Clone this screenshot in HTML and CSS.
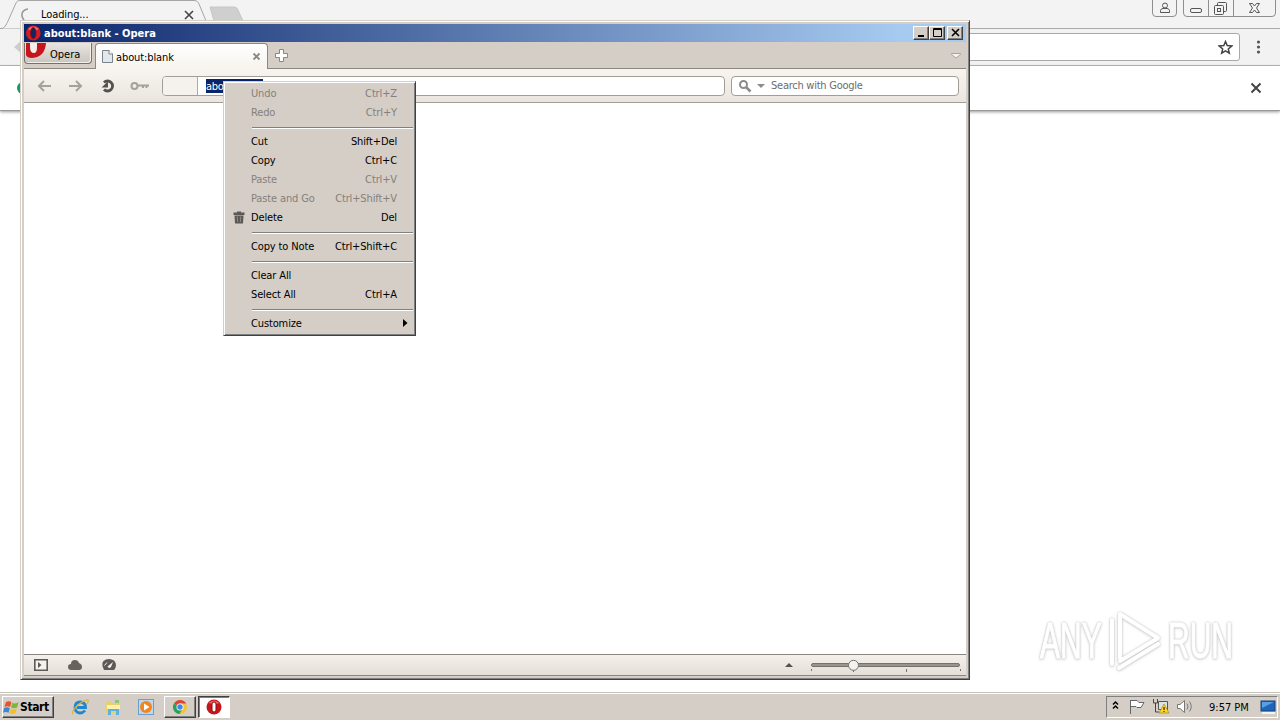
FILE: index.html
```html
<!DOCTYPE html>
<html lang="en">
<head>
	<meta charset="UTF-8">
	<title>Desktop</title>
	<link rel="stylesheet" href="styles.css">
</head>
<body>
	<!-- browser in the background -->
	<div class="chrome">
		<div class="chrome-tabs">
			<svg class="tab-shapes" width="260" height="29" viewBox="0 0 260 29">
				<path d="M0 28.5H1C5 28 6 25 8 21L16 3C17 1 18 .5 21 .5H194C197 .5 198 2 199 4L209 28" fill="#f3f3f3" stroke="#a5a5a5"/>
				<path d="M210 7H234Q237 7 238 10L243 21H214Z" fill="#cfcfcf" stroke="#c6c6c6"/>
				<path d="M28 9C22 10 20 15 24 20" fill="none" stroke="#999" stroke-width="1.6"/>
				<path d="M185 11L193 19M193 11L185 19" stroke="#444" stroke-width="1.6"/>
			</svg>
			<span class="loading">Loading...</span>
			<div class="chrome-buttons">
				<svg width="130" height="18" viewBox="0 0 130 18" fill="none" stroke="#8f8f8f">
					<path d="M2.500 0V13Q2.500 16.500 6 16.500H23Q26.500 16.500 26.500 13V0M33.500 0V13Q33.500 16.500 37 16.500H122Q125.500 16.500 125.500 13V0M58.500 0V16M83.500 0V16"/>
					<g stroke="#555">
						<circle cx="15" cy="5.500" r="2.500"/>
						<path d="M10.500 12.500V10.500Q11 8.500 13 8.500H17Q19 8.500 19.500 10.500V12.500Z"/>
						<rect x="40.500" y="8.500" width="11" height="4" rx="1.500"/>
						<rect x="67.500" y="2.500" width="9" height="9" rx="1"/>
						<rect x="64.500" y="5.500" width="9" height="9" rx="1" fill="#f3f3f3"/>
						<rect x="67.500" y="8.500" width="3" height="3"/>
						<path d="M99.500 3.500H102.500L104.500 6L106.500 3.500H109.500L106.500 8L109.500 12.500H106.500L104.500 10L102.500 12.500H99.500L102.500 8Z"/>
					</g>
				</svg>
			</div>
		</div>
		<div class="chrome-toolbar">
			<svg class="chrome-back" width="20" height="18" viewBox="0 0 20 18"><path d="M14 9L22 2V16Z" fill="#ccc"/></svg>
			<div class="omnibox">
				<svg width="15" height="15" viewBox="0 0 15 15"><path d="M7.500 1.500L9.200 5.600L13.700 6L10.300 8.900L11.300 13.200L7.500 10.900L3.700 13.200L4.700 8.900L1.300 6L5.800 5.600Z" fill="none" stroke="#444" stroke-width="1.500"/></svg>
			</div>
			<svg width="40" height="16" viewBox="0 0 40 16" fill="#555"><circle cx="18.500" cy="3" r="1.600"/><circle cx="18.500" cy="8" r="1.600"/><circle cx="18.500" cy="13" r="1.600"/></svg>
		</div>
		<div class="infobar">
			<span class="dot"></span>
			<svg width="12" height="12" viewBox="0 0 12 12"><path d="M1.500 1.500L10.500 10.500M10.500 1.500L1.500 10.500" stroke="#444" stroke-width="2"/></svg>
		</div>
	</div>

	<div class="watermark">
		<span>ANY</span>
		<svg width="58" height="66" viewBox="0 0 58 66" fill="none" stroke="#fff" stroke-width="4" stroke-linejoin="round" stroke-linecap="round">
			<path d="M16 50V6L54 30L16 53"/>
			<path d="M8 12V56"/>
			<path d="M15 60L54 36"/>
		</svg>
		<span>RUN</span>
	</div>

	<!-- opera window -->
	<div class="opera">
		<div class="titlebar">
			<svg width="17" height="18" viewBox="0 0 17 18"><ellipse cx="9.300" cy="9" rx="7.300" ry="7.600" fill="#d51c20"/><path d="M4 5Q9 0 15 5Q9 8 4 5" fill="#ee7770"/><ellipse cx="9.300" cy="9" rx="2.700" ry="5.600" fill="#13245e" stroke="#8c0d18"/></svg>
			<span class="title">about:blank - Opera</span>
			<div class="win-btn"><svg width="14" height="12"><path d="M3 9H9" stroke="#000" stroke-width="2"/></svg></div>
			<div class="win-btn"><svg width="14" height="12"><path d="M2.500 1.500H10.500V9.500H2.500ZM2 2.500H11" fill="none" stroke="#000"/></svg></div>
			<div class="win-btn close"><svg width="14" height="12"><path d="M3 2L10 9M10 2L3 9" stroke="#000" stroke-width="1.600"/></svg></div>
		</div>
		<div class="tabbar">
			<div class="opera-btn">
				<svg width="22" height="18" viewBox="0 0 22 18"><path d="M1 0H21Q20 14 7 15Q2 15 1 12Z" fill="#c8141c"/><path d="M5 0V4Q5 10 9 10Q12 10 12 4V0Z" fill="#f3efec"/></svg>
				<span>Opera</span>
			</div>
			<div class="tab">
				<svg width="13" height="15" viewBox="0 0 13 15"><path d="M1.500 1.500H8L11.500 5V13.500H1.500Z" fill="#e3e8ec" stroke="#7b828a"/><path d="M8 1V5H12" fill="#fff" stroke="#7b828a"/></svg>
				<span>about:blank</span>
				<svg class="tab-x" width="9" height="9" viewBox="0 0 9 9"><path d="M1.500 1.500L7.500 7.500M7.500 1.500L1.500 7.500" stroke="#8d8984" stroke-width="1.800"/></svg>
			</div>
			<svg class="plus" width="15" height="15" viewBox="0 0 15 15"><path d="M5.500 1.500H9.500V5.500H13.500V9.500H9.500V13.500H5.500V9.500H1.500V5.500H5.500Z" fill="#fff" stroke="#8a857f"/></svg>
			<svg class="tab-menu" width="10" height="7" viewBox="0 0 10 7"><path d="M.5 1.500H9.500V2.500L5 6L.5 2.500Z" fill="#f6f2ee" stroke="#a9a39d"/></svg>
		</div>
		<div class="toolbar">
			<svg class="nav" width="128" height="20" viewBox="0 0 128 20">
				<g fill="none" stroke="#a5a19c" stroke-width="2">
					<path d="M27 10H15M20 5L15 10L20 15"/>
					<path d="M45 10H57M52 5L57 10L52 15"/>
				</g>
				<path d="M80 6.500A5 5 0 1 1 80 13.500" fill="none" stroke="#55514e" stroke-width="2.800"/>
				<path d="M77.500 11.500H84V5.500Z" fill="#55514e"/>
				<circle cx="110.500" cy="10" r="3" fill="none" stroke="#a5a19c" stroke-width="2"/>
				<path d="M113 9.500H125M119 9V12M122.500 9V12" fill="none" stroke="#a5a19c" stroke-width="2"/>
			</svg>
			<div class="address"><span class="badge"></span><span class="selected">abo</span></div>
			<div class="search">
				<svg width="27" height="14" viewBox="0 0 27 14"><circle cx="4.500" cy="5.500" r="3.500" fill="none" stroke="#8b8b8b" stroke-width="2"/><path d="M7 8L11.500 12.500" stroke="#8b8b8b" stroke-width="2.500"/><path d="M18 5H26L22 9Z" fill="#8b8b8b"/></svg>
				<span>Search with Google</span>
			</div>
		</div>
		<div class="page"></div>
		<div class="statusbar">
			<svg width="90" height="16" viewBox="0 0 90 16">
				<path d="M.8 2.800H13.200V13.200H.8Z" fill="#f5f1ec" stroke="#5d5956" stroke-width="1.600"/><path d="M4 5L7.500 8L4 11Z" fill="#5d5956"/>
				<path d="M37 13Q34 12.500 34 10Q34 7 37 7Q37 3 41 3Q44 3 45 6Q48 7 48 10Q48 13 45 13Z" fill="#67635f"/>
				<path d="M70 13Q65.500 5 72 2.500Q76 1 80 3.500Q84 8 80 13Z" fill="#5d5956"/><path d="M73.500 9.500L79 5L77 10Q75 12 73.500 9.500Z" fill="#f5f1ec"/><path d="M70.500 8.500L73 5.500" stroke="#f5f1ec"/>
			</svg>
			<svg width="182" height="18" viewBox="0 0 182 18">
				<path d="M1 10L5 6L9 10Z" fill="#55514e"/>
				<rect x="27.500" y="6.500" width="148" height="3" rx="1.500" fill="#9a948e" stroke="#77716b"/>
				<path d="M27.500 12V14M69.500 12V15M122.500 12V15M176.500 12V14" stroke="#77716b"/>
				<circle cx="69.500" cy="8.300" r="5" fill="#f4f2f0" stroke="#77716b"/>
			</svg>
		</div>
	</div>

	<div class="menu">
		<div class="item off"><span>Undo</span><span>Ctrl+Z</span></div>
		<div class="item off"><span>Redo</span><span>Ctrl+Y</span></div>
		<hr>
		<div class="item"><span>Cut</span><span>Shift+Del</span></div>
		<div class="item"><span>Copy</span><span>Ctrl+C</span></div>
		<div class="item off"><span>Paste</span><span>Ctrl+V</span></div>
		<div class="item off"><span>Paste and Go</span><span>Ctrl+Shift+V</span></div>
		<div class="item">
			<svg class="trash" width="12" height="13" viewBox="0 0 12 13"><path d="M.5 1.500H4V.5H8V1.500H11.500V4H.5ZM1.500 4.500H10.500L10 12.500H2Z" fill="#5c5855"/><path d="M4.500 5.500V11M7.500 5.500V11" stroke="#8b8681"/></svg>
			<span>Delete</span><span>Del</span>
		</div>
		<hr>
		<div class="item"><span>Copy to Note</span><span>Ctrl+Shift+C</span></div>
		<hr>
		<div class="item"><span>Clear All</span></div>
		<div class="item"><span>Select All</span><span>Ctrl+A</span></div>
		<hr>
		<div class="item"><span>Customize</span><svg class="arrow" width="5" height="8"><path d="M0 0L4.500 4L0 8Z"/></svg></div>
	</div>

	<div class="taskbar">
		<div class="start">
			<svg width="17" height="17" viewBox="0 0 18 17"><path d="M3 3Q6 1 9 3L7.500 8Q5 6.500 1.500 8Z" fill="#e8532b"/><path d="M10 3.500Q13 5 16.500 3L15 8.500Q12 10 8.500 8.500Z" fill="#78b93c"/><path d="M1.200 9Q4 7.500 7.200 9L6 14Q3 12.500 0 14Z" fill="#3c87cf"/><path d="M8.200 9.500Q11 11 14.700 9.500L13 14.500Q10 16 7 14.500Z" fill="#f6bd2a"/></svg>
			<span>Start</span>
		</div>
		<div class="launch">
			<svg width="18" height="18" viewBox="0 0 18 18"><path d="M14 12.500Q12 15 9 15Q4 14.500 4 9.500Q4 4 9.500 4Q14.500 4.500 14.500 9.500H6" fill="none" stroke="#1e86d2" stroke-width="2.800"/><path d="M2 16Q0 14 6 8Q14 1 17 2Q18 3 16 6" fill="none" stroke="#ddb63c" stroke-width="1.300"/></svg>
			<svg width="18" height="18" viewBox="0 0 18 18"><path d="M2 3H7L8 5H15V15H2Z" fill="#e8cf70"/><path d="M3 7H16V11H3Z" fill="#fff1ad"/><path d="M4 17V11H15V17H12V13H7V17Z" fill="#59b2e0"/><path d="M11 2H15V5H11Z" fill="#8fc576"/></svg>
			<svg width="18" height="18" viewBox="0 0 18 18"><rect x="1.500" y="1.500" width="15" height="15" fill="#bcd7ef" stroke="#6c9fcf"/><circle cx="9" cy="9" r="6" fill="#f1871b"/><path d="M7 5.500L12.500 9L7 12.500Z" fill="#fff"/></svg>
		</div>
		<div class="task">
			<svg width="16" height="16" viewBox="0 0 16 16"><circle cx="8" cy="8" r="7" fill="#f3c52f"/><path d="M8 8L2 4.500A7 7 0 0 1 14.200 4.500H8Z" fill="#dc4437"/><path d="M1.900 4.500A7 7 0 0 0 7.500 15L10.500 10L8 8Z" fill="#2e9f59"/><circle cx="8" cy="8" r="3.500" fill="#fff"/><circle cx="8" cy="8" r="2.700" fill="#4384ee"/></svg>
		</div>
		<div class="task active">
			<svg width="16" height="16" viewBox="0 0 16 16"><circle cx="8" cy="8" r="7.500" fill="#c5161c"/><path d="M2.500 4Q8-1 13.500 4Q9 6 2.500 4" fill="#e7655e"/><rect x="6" y="3" width="4" height="10" rx="2" fill="#fff" stroke="#8c080d"/></svg>
		</div>
		<div class="tray">
			<svg width="92" height="18" viewBox="0 0 92 18">
				<path d="M6 6.500L8.500 4L11 6.500M6 10.500L8.500 8L11 10.500" fill="none" stroke="#000" stroke-width="1.500"/>
				<path d="M23.500 2V16M24 2.500H30L32 4.500H37L34 9.500H30L29 8.500H24" fill="#fff" stroke="#666"/>
				<path d="M51.500 3.500H60.500V11.500H51.500ZM53 14.500H59" fill="#d9e2e6" stroke="#555"/><path d="M46.500 1V5H50.500V1M48.500 5V14H52" fill="none" stroke="#444"/>
				<path d="M57 6L62 15H52Z" fill="#ffd530" stroke="#9c7c00" stroke-width=".6"/><path d="M57 9V12M57 13V14" stroke="#000"/>
				<path d="M70.500 6.500H73L77.500 2.500V14.500L73 10.500H70.500Z" fill="#fff" stroke="#777"/><path d="M80 5.500Q82 8.500 80 11.500M82.500 3.500Q86 8.500 82.500 13.500" fill="none" stroke="#777"/>
			</svg>
			<span class="clock">9:57 PM</span>
			<svg width="17" height="15" viewBox="0 0 17 15"><rect x="1" y="1" width="14" height="10" fill="#1d67bb" stroke="#174279"/><path d="M2 2H14L2 8Z" fill="#59a0e3"/><path d="M2 13H15" stroke="#f3f3f3" stroke-width="2"/></svg>
		</div>
	</div>
</body>
</html>
```
FILE: styles.css
```css
* {
	box-sizing: border-box;
}

body {
	margin: 0;
	height: 720px;
	position: relative;
	display: flex;
	flex-direction: column;
	overflow: hidden;
	background: #fff;
	font: 11px "DejaVu Sans Condensed", "DejaVu Sans", sans-serif;
	font-stretch: condensed;
	letter-spacing: -0.3px;
	color: #000;
}

svg {
	display: block;
	flex: none;
}

.chrome {
	flex: 1;
}

.chrome-tabs {
	position: relative;
	display: flex;
	justify-content: space-between;
	height: 29px;
	background: #f3f3f3;
	border-bottom: 1px solid #aaa;
}

.tab-shapes {
	position: absolute;
	left: 0;
	top: 0;
}

.loading {
	position: relative;
	padding: 8px 0 0 41px;
	line-height: 13px;
	letter-spacing: -0.1px;
}

.chrome-toolbar {
	display: flex;
	align-items: center;
	height: 37px;
	background: #f2f2f2;
	border-bottom: 1px solid #b3b3b3;
}

.omnibox {
	display: flex;
	flex: 1;
	align-items: center;
	justify-content: flex-end;
	height: 28px;
	margin-left: 30px;
	padding-right: 6px;
	background: #fff;
	border: 1px solid #a8a8a8;
	border-radius: 3px;
}

.infobar {
	display: flex;
	align-items: center;
	justify-content: space-between;
	height: 45px;
	padding: 0 18px 0 17px;
	background: #fff;
	border-bottom: 1px solid #999;
	box-shadow: 0 1px 3px #999;
}

.dot {
	width: 12px;
	height: 12px;
	border-radius: 50%;
	background: #0f9d68;
}

/* watermark */
.watermark {
	position: absolute;
	left: 1040px;
	top: 608px;
	display: flex;
	align-items: center;
	font: 50px/66px "Liberation Sans", sans-serif;
	letter-spacing: 0;
	color: #fff;
	filter: drop-shadow(0 0 1px #c4c4c4) drop-shadow(0 1px 1px #e0e0e0);
}

.watermark span {
	width: 64px;
	transform: scaleX(0.6);
	transform-origin: left;
	-webkit-text-stroke: 1px #fff;
}

.watermark svg {
	margin-right: 6px;
}

/* opera window */
.opera {
	position: absolute;
	left: 20px;
	top: 20px;
	display: flex;
	flex-direction: column;
	width: 950px;
	height: 660px;
	padding: 2px;
	background: #d5cec7;
	border: 1px solid #404040;
	border-top-color: #d5cec7;
	border-left-color: #d5cec7;
	box-shadow: inset 1px 1px #fff, inset -1px -1px #808080;
}

.titlebar {
	display: flex;
	align-items: center;
	height: 18px;
	margin: 1px 1px 0 1px;
	padding-right: 3px;
	background: linear-gradient(90deg, #0a246a, #a6caf0 93%);
	color: #fff;
}

.title {
	flex: 1;
	padding-left: 3px;
	font-weight: bold;
	letter-spacing: 0;
}

.win-btn {
	width: 16px;
	height: 14px;
	padding-left: 1px;
	background: #d5cec7;
	border: 1px solid #404040;
	border-top-color: #fff;
	border-left-color: #fff;
	box-shadow: inset -1px -1px #808080;
}

.win-btn.close {
	margin-left: 2px;
}

.tabbar {
	display: flex;
	height: 27px;
	padding-top: 1px;
	margin: 0 1px;
	background: #d5cec7;
	box-shadow: inset 0 -1px #8b8680;
}

.opera-btn {
	display: flex;
	align-items: center;
	width: 68px;
	height: 21px;
	margin-right: 3px;
	background: linear-gradient(#e9e5e1, #cbc5be);
	border: 1px solid #77716b;
	border-top: 0;
	border-radius: 0 0 4px 4px;
	box-shadow: inset -1px -1px #f2eeea;
}

.opera-btn svg {
	align-self: flex-start;
}

.opera-btn span {
	padding: 2px 0 0 3px;
	letter-spacing: 0;
}

.tab {
	display: flex;
	align-items: center;
	width: 173px;
	height: 26px;
	padding: 0 6px 1px 5px;
	background: linear-gradient(#fff, #f7f3ee);
	border: 1px solid #8b8680;
	border-bottom: 0;
	border-radius: 4px 4px 0 0;
}

.tab span {
	flex: 1;
	padding: 3px 0 0 2px;
	letter-spacing: -0.1px;
}

.plus {
	margin: 5px 0 0 6px;
}

.tab-menu {
	margin: 9px 5px 0 auto;
}

.toolbar {
	display: flex;
	align-items: center;
	height: 34px;
	margin: 0 1px;
	padding-right: 7px;
	background: linear-gradient(#f8f4ef, #eae5df);
	border-bottom: 1px solid #a29d97;
}

.nav {
	margin-right: 10px;
}

.address,
.search {
	display: flex;
	align-items: center;
	height: 20px;
	background: #fff;
	border: 1px solid #a29d97;
	border-radius: 4px;
}

.address {
	flex: 1;
	margin-right: 6px;
}

.badge {
	width: 35px;
	height: 18px;
	margin-right: 8px;
	background: #f5f1ed;
	border-right: 1px solid #aaa;
	border-radius: 3px 0 0 3px;
}

.selected {
	width: 57px;
	height: 14px;
	line-height: 15px;
	background: #0a246a;
	color: #fff;
}

.search {
	width: 228px;
	padding-left: 7px;
	color: #6c6c6c;
}

.search span {
	padding: 1px 0 0 5px;
	line-height: 14px;
	letter-spacing: -0.25px;
}

.page {
	flex: 1;
	margin: 0 1px;
	background: #fff;
}

.statusbar {
	display: flex;
	justify-content: space-between;
	height: 22px;
	margin: 0 1px 1px;
	padding: 2px 0 0 10px;
	background: linear-gradient(#f5f0eb, #e4ded8);
	border-top: 1px solid #8b8680;
	border-bottom: 1px solid #8b8680;
}

/* context menu */
.menu {
	position: absolute;
	left: 223px;
	top: 81px;
	width: 193px;
	height: 255px;
	padding: 2px 1px;
	background: #d5cec7;
	border: 1px solid #404040;
	border-top-color: #d5cec7;
	border-left-color: #d5cec7;
	box-shadow: inset 1px 1px #fff, inset -1px -1px #808080;
	letter-spacing: -0.13px;
}

.item {
	position: relative;
	display: flex;
	justify-content: space-between;
	height: 19px;
	padding: 0 17px 0 26px;
	line-height: 19px;
}

.off {
	color: #85807b;
}

.menu hr {
	height: 2px;
	margin: 5px 1px 3px 27px;
	border: 0;
	border-top: 1px solid #808080;
	border-bottom: 1px solid #fff;
}

.trash {
	position: absolute;
	left: 8px;
	top: 3px;
}

.arrow {
	margin: 5px -11px 0 0;
}

/* taskbar */
.taskbar {
	display: flex;
	align-items: center;
	height: 28px;
	padding: 1px 2px 0;
	background: #d5cec7;
	border-top: 1px solid #c5c2bb;
	box-shadow: inset 0 1px #fff;
}

.start,
.task {
	display: flex;
	align-items: center;
	height: 22px;
	background: #d5cec7;
	border: 1px solid #404040;
	border-top-color: #fff;
	border-left-color: #fff;
	box-shadow: inset -1px -1px #808080;
}

.start {
	width: 52px;
	font-size: 12px;
	font-weight: bold;
	letter-spacing: -0.4px;
}

.launch {
	display: flex;
	gap: 15px;
	padding: 0 9px 0 17px;
}

.task {
	justify-content: center;
	width: 32px;
	margin-right: 2px;
}

.task.active {
	background: #fff;
	border-color: #404040 #fff #fff #404040;
	box-shadow: inset 1px 1px #808080;
}

.tray {
	display: flex;
	align-items: center;
	width: 172px;
	height: 22px;
	margin-left: auto;
	border: 1px solid #808080;
	border-right-color: #fff;
	border-bottom-color: #fff;
}

.clock {
	flex: 1;
	padding-left: 10px;
	letter-spacing: 0;
}
```
